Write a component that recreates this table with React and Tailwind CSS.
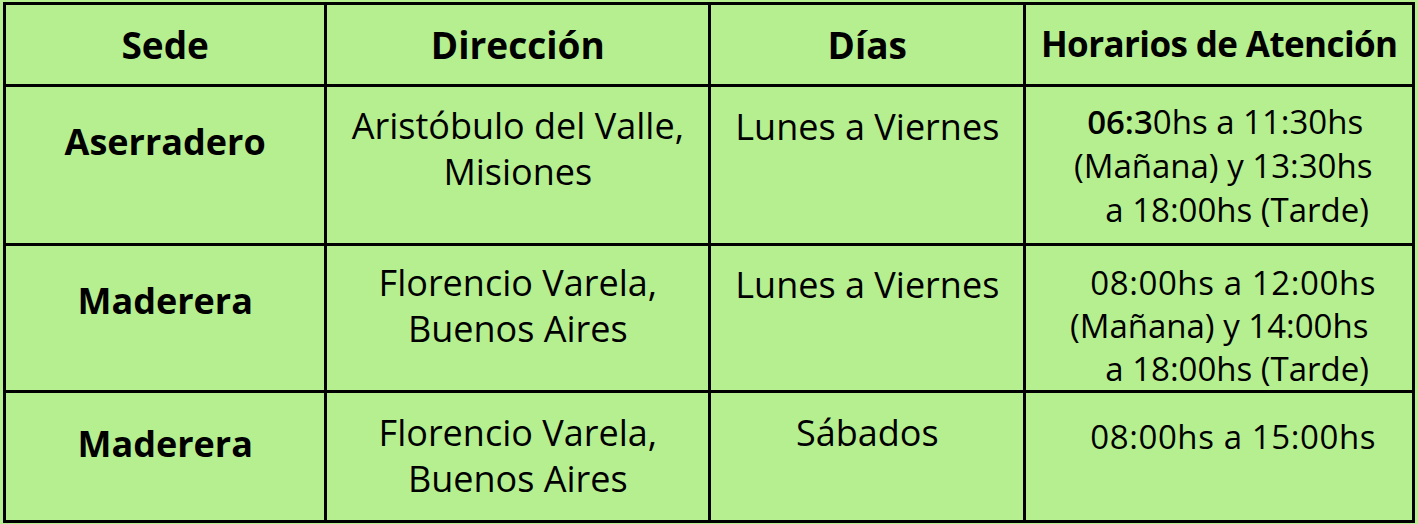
const rows = [
  {
    sede: "Aserradero",
    dir: ["Aristóbulo del Valle,", "Misiones"],
    dias: "Lunes a Viernes",
    hor: [
      <span className="pl-3">
        <span className="font-semibold">06:3</span>0hs a 11:30hs
      </span>,
      <span className="pl-2">(Mañana) y 13:30hs</span>,
      <span className="pl-9">a 18:00hs (Tarde)</span>,
    ],
    h: "h-[159px]",
    pSede: "pt-[32px]",
    pDir: "pt-[16px]",
    pDias: "pt-[17px]",
    pHor: "pt-[13px] leading-[44px]",
  },
  {
    sede: "Maderera",
    dir: ["Florencio Varela,", "Buenos Aires"],
    dias: "Lunes a Viernes",
    hor: [
      <span className="pl-7 tracking-[0.6px]">08:00hs a 12:00hs</span>,
      "(Mañana) y 14:00hs",
      <span className="pl-9">a 18:00hs (Tarde)</span>,
    ],
    h: "h-[144px]",
    pSede: "pt-[32px]",
    pDir: "pt-[14px]",
    pDias: "pt-[16px]",
    pHor: "pt-[15px] leading-[43px]",
  },
  {
    sede: "Maderera",
    dir: ["Florencio Varela,", "Buenos Aires"],
    dias: "Sábados",
    hor: [<span className="pl-7 tracking-[0.6px]">08:00hs a 15:00hs</span>],
    h: "h-[130px]",
    pSede: "pt-[28px]",
    pDir: "pt-[17px]",
    pDias: "pt-[17px]",
    pHor: "pt-[22px] leading-[44px]",
  },
];

export default function App() {
  return (
    <div className="w-[1418px] h-[524px] bg-[#b6ef90] pt-[2px] pl-[3px] font-['Open_Sans',sans-serif] text-black">
      <table className="w-[1412px] border-collapse border-[3px] border-black bg-[#b6ef90]">
        <colgroup>
          <col className="w-[322px]" />
          <col className="w-[385px]" />
          <col className="w-[316px]" />
          <col className="w-[389px]" />
        </colgroup>
        <thead>
          <tr className="h-[82px] text-[37px] font-bold">
            <th className="border-[3px] border-black text-center align-middle">Sede</th>
            <th className="border-[3px] border-black text-center align-middle">Dirección</th>
            <th className="border-[3px] border-black text-center align-middle">Días</th>
            <th className="border-[3px] border-black text-center align-middle text-[35px] tracking-[-0.6px]">
              Horarios de Atención
            </th>
          </tr>
        </thead>
        <tbody>
          {rows.map((r, i) => (
            <tr key={i} className={r.h}>
              <td className={`border-[3px] border-black text-center align-top text-[36px] leading-[46px] font-bold ${r.pSede}`}>
                {r.sede}
              </td>
              <td className={`border-[3px] border-black text-center align-top text-[36px] leading-[46px] ${r.pDir}`}>
                {r.dir.map((l, j) => (
                  <div key={j}>{l}</div>
                ))}
              </td>
              <td className={`border-[3px] border-black text-center align-top text-[36px] leading-[46px] ${r.pDias}`}>
                {r.dias}
              </td>
              <td className={`border-[3px] border-black text-center align-top text-[33px] whitespace-nowrap ${r.pHor}`}>
                {r.hor.map((l, j) => (
                  <div key={j}>{l}</div>
                ))}
              </td>
            </tr>
          ))}
        </tbody>
      </table>
    </div>
  );
}
